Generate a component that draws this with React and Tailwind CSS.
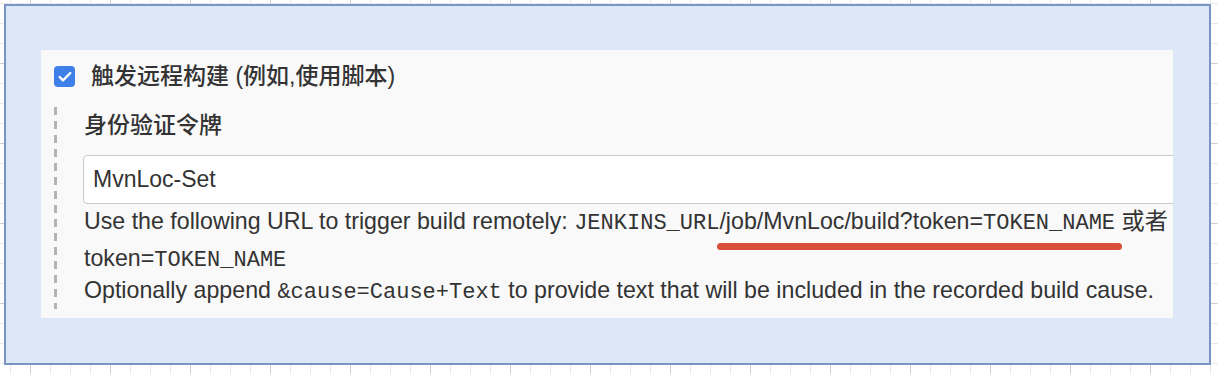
import { Check } from 'lucide-react'

const sans = "font-['Liberation_Sans','Noto_Sans_CJK_SC',sans-serif]"
const mono = "font-['Liberation_Mono',monospace] text-[22px]"

function Code({ children }) {
  return <span className={mono}>{children}</span>
}

export default function App() {
  return (
    <div className="w-[1218px] h-[374px] overflow-hidden bg-white bg-[linear-gradient(to_right,#cfcfcf_1px,transparent_1px),linear-gradient(to_bottom,#cfcfcf_1px,transparent_1px),linear-gradient(to_right,#e8e8e8_1px,transparent_1px),linear-gradient(to_bottom,#e8e8e8_1px,transparent_1px)] bg-[size:80px_80px,80px_80px,20px_20px,20px_20px] bg-[position:30px_0,0_63px,10px_0,0_3px] pt-[4px] pl-[4px]">
      {/* outer frame */}
      <div className="w-[1207px] h-[361px] border-2 border-[#7a94c4] bg-[#dce7f8] pt-[44px] pl-[35px]">
        {/* trigger panel */}
        <div className={`relative w-[1132px] h-[268px] overflow-hidden bg-[#f9f9f9] pl-[13px] pt-[16px] text-[#333] ${sans}`}>
          <div className="flex items-center h-[21px] gap-[16px]">
            <span className="w-[21px] h-[21px] rounded-[4px] bg-[#3f80e8] flex items-center justify-center">
              <Check size={16} strokeWidth={3.5} className="text-white" />
            </span>
            <span className="text-[23px] leading-[21px] font-medium whitespace-nowrap">触发远程构建 (例如,使用脚本)</span>
          </div>

          <div className="flex mt-[20px]">
            <div className="w-[3px] shrink-0 bg-[repeating-linear-gradient(to_bottom,#b3b3b3_0_8px,transparent_8px_14px)]" />
            <div className="pl-[27px] pt-[3px]">
              <div className="text-[23px] leading-[30px] font-medium whitespace-nowrap">身份验证令牌</div>
              <div className="mt-[15px] -ml-px w-[1110px] h-[49px] border border-[#c9c9c9] rounded-[4px] bg-white pl-[9px] flex items-center text-[23px] text-[#333]">
                MvnLoc-Set
              </div>
              <div className="text-[23.2px] leading-[35px] whitespace-nowrap">
                Use the following URL to trigger build remotely: <Code>JENKINS_URL</Code>/job/MvnLoc/build?token=<Code>TOKEN_NAME</Code> 或者
                <br />
                token=<Code>TOKEN_NAME</Code>
              </div>
              <div className="-mt-[4px] text-[23.2px] leading-[32px] whitespace-nowrap">
                Optionally append <Code>&amp;cause=Cause+Text</Code> to provide text that will be included in the recorded build cause.
              </div>
            </div>
          </div>

          {/* annotation underline */}
          <div className="absolute left-[676px] top-[193px] w-[405px] h-[7px] rounded-full bg-[#d84e37]" />
        </div>
      </div>
    </div>
  )
}
